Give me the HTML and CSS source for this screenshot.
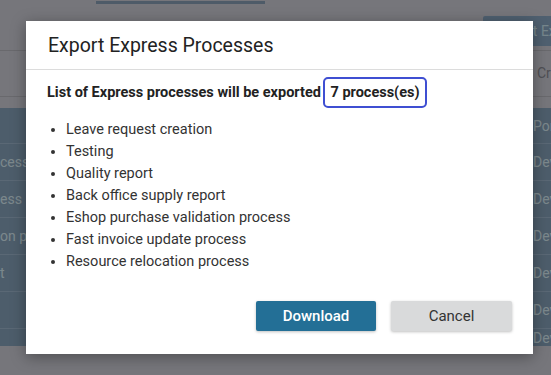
FILE: index.html
```html
<!DOCTYPE html>
<html>
<head>
<meta charset="utf-8">
<link rel="stylesheet" href="styles.css">
</head>
<body>
<div class="page">
  <div class="topbar">
    <div class="tabs"><div class="tab"></div></div>
    <div class="export-btn">Export Express</div>
  </div>
  <div class="toolbar"><span class="create">Create</span></div>
  <div class="table">
    <div class="row head"><span class="c1"></span><span class="c2">Portal</span></div>
    <div class="row"><span class="c1">cess</span><span class="c2">Developer</span></div>
    <div class="row"><span class="c1">ess</span><span class="c2">Developer</span></div>
    <div class="row"><span class="c1">on process</span><span class="c2">Developer</span></div>
    <div class="row"><span class="c1">t</span><span class="c2">Developer</span></div>
    <div class="row"><span class="c1"></span><span class="c2">Developer</span></div>
    <div class="row last"><span class="c1"></span><span class="c2">Developer</span></div>
  </div>
</div>
<div class="overlay"></div>
<div class="dialog">
  <div class="dialog-header">Export Express Processes</div>
  <div class="dialog-body">
    <div class="summary">List of Express processes will be exported <span class="count">7 process(es)</span></div>
    <ul class="list">
      <li>Leave request creation</li>
      <li>Testing</li>
      <li>Quality report</li>
      <li>Back office supply report</li>
      <li>Eshop purchase validation process</li>
      <li>Fast invoice update process</li>
      <li>Resource relocation process</li>
    </ul>
  </div>
  <div class="dialog-footer">
    <button class="btn primary">Download</button>
    <button class="btn secondary">Cancel</button>
  </div>
</div>
</body>
</html>
```

FILE: styles.css
```css
* { box-sizing: border-box; }
html, body { margin: 0; padding: 0; }
body {
  width: 551px;
  height: 375px;
  overflow: hidden;
  background: #d8d8e0;
  font-family: Roboto, "Liberation Sans", sans-serif;
  position: relative;
}
.page { width: 551px; }
.topbar {
  height: 51px;
  border-bottom: 1px solid #bfbfc6;
  display: flex;
  justify-content: space-between;
  align-items: flex-start;
}
.tabs { padding-left: 96px; }
.tab { width: 169px; height: 3px; margin-top: 1px; background: #8ea6bd; }
.export-btn {
  margin-top: 16px;
  width: 68px;
  height: 30px;
  background: #90afcc;
  color: #d7f5ff;
  font-size: 14px;
  line-height: 30px;
  padding-left: 14px;
  white-space: nowrap;
  overflow: hidden;
  border-radius: 2px 0 0 2px;
}
.toolbar {
  height: 46px;
  border-bottom: 1px solid #bfbfc6;
  display: flex;
  justify-content: flex-end;
  align-items: center;
}
.create { color: #91919b; font-size: 14px; width: 14px; overflow: hidden; white-space: nowrap; margin-top: -2px; }
.table { margin-top: 11px; background: #8ca9c3; }
.row {
  height: 37px;
  border-bottom: 1px solid #a4bdd5;
  display: flex;
  justify-content: space-between;
  align-items: center;
  font-size: 14px;
  color: #e1f7ff;
  overflow: hidden;
  white-space: nowrap;
}
.row.head { height: 36px; }
.row.last { border-bottom: none; height: 17px; }
.c1 { width: 26px; overflow: hidden; }
.c2 { width: 18px; overflow: hidden; }
.overlay {
  position: absolute;
  inset: 0;
  background: rgba(0, 0, 0, 0.45);
}
.dialog {
  position: absolute;
  left: 26px;
  top: 21px;
  width: 507px;
  height: 333px;
  background: #fff;
  box-shadow: 0 3px 14px rgba(0, 0, 0, 0.35);
  color: #222;
}
.dialog-header {
  height: 49px;
  padding: 0 22px;
  display: flex;
  align-items: center;
  font-size: 19.5px;
  color: #222;
  border-bottom: 1px solid #dcdcdc;
}
.dialog-body { padding: 0 21px; }
.summary {
  margin-top: 7px;
  font-size: 14.5px;
  font-weight: 700;
  color: #222;
  line-height: 31px;
}
.count {
  display: inline-block;
  border: 2px solid #3f4fd2;
  border-radius: 5px;
  padding: 0 5px 0 5px;
  line-height: 27px;
  margin-left: -1px;
}
.list {
  margin: 11px 0 0;
  padding-left: 19px;
  font-size: 14.5px;
  line-height: 22px;
  color: #333;
}
.dialog-footer {
  margin-top: 28px;
  padding-right: 21px;
  display: flex;
  justify-content: flex-end;
  gap: 15px;
}
.btn {
  height: 30px;
  border: none;
  border-radius: 2px;
  font-family: Roboto, "Liberation Sans", sans-serif;
  font-size: 15px;
  box-shadow: 0 1px 3px rgba(0, 0, 0, 0.25);
}
.primary { width: 120px; background: #236f96; color: #fff; font-weight: 500; }
.secondary { width: 121px; background: #d9dadb; color: #333; }
```
